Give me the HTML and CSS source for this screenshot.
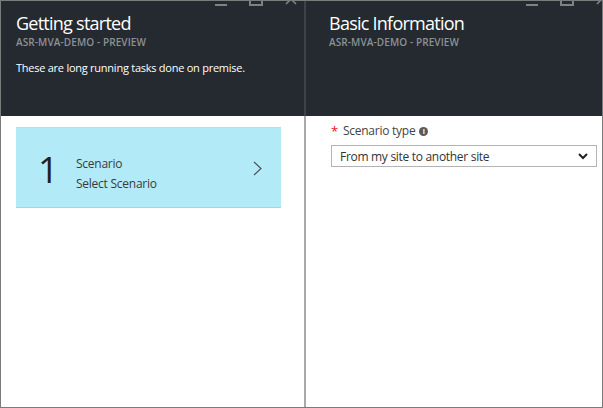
FILE: index.html
```html
<!DOCTYPE html>
<html lang="en">
<head>
<meta charset="utf-8">
<title>Getting started</title>
<link rel="stylesheet" href="styles.css">
</head>
<body>
<div class="frame">
  <section class="blade blade-left">
    <header class="blade-head">
      <div class="win-ctrls">
        <span class="ctl ctl-min"></span>
        <span class="ctl ctl-max"></span>
        <svg class="ctl-close" width="12" height="12" viewBox="0 0 12 12"><path d="M1 1 L11 11 M11 1 L1 11" stroke="#7d8287" stroke-width="1.6" fill="none"/></svg>
      </div>
      <h1 class="title">Getting started</h1>
      <div class="sub">ASR-MVA-DEMO - PREVIEW</div>
      <p class="desc">These are long running tasks done on premise.</p>
    </header>
    <div class="blade-body body-left">
      <div class="step">
        <div class="step-num">1</div>
        <div class="step-text">
          <div>Scenario</div>
          <div>Select Scenario</div>
        </div>
        <svg class="step-chev" width="9" height="15" viewBox="0 0 9 15"><path d="M1 1 L8 7.5 L1 14" stroke="#4a4a4a" stroke-width="1.1" fill="none"/></svg>
      </div>
    </div>
  </section>
  <section class="blade blade-right">
    <header class="blade-head head-right">
      <div class="win-ctrls">
        <span class="ctl ctl-min"></span>
        <span class="ctl ctl-max"></span>
        <svg class="ctl-close" width="12" height="12" viewBox="0 0 12 12"><path d="M1 1 L11 11 M11 1 L1 11" stroke="#7d8287" stroke-width="1.6" fill="none"/></svg>
      </div>
      <h1 class="title">Basic Information</h1>
      <div class="sub">ASR-MVA-DEMO - PREVIEW</div>
    </header>
    <div class="blade-body body-right">
      <div class="field-label">
        <span class="req">*</span>
        <span>Scenario type</span>
        <span class="info">i</span>
      </div>
      <div class="select">
        <span>From my site to another site</span>
        <svg class="sel-chev" width="10" height="7" viewBox="0 0 10 7"><path d="M1 1 L5 5 L9 1" stroke="#222" stroke-width="2" fill="none"/></svg>
      </div>
    </div>
  </section>
</div>
</body>
</html>
```

FILE: styles.css
```css
* { box-sizing: border-box; }
html, body { margin: 0; padding: 0; background: #fff; }
body { font-family: "Open Sans", "Noto Sans", sans-serif; }

.frame {
  width: 603px;
  height: 408px;
  border: 1px solid #7b7b7b;
  display: flex;
  overflow: hidden;
}

.blade { display: flex; flex-direction: column; }
.blade-left { width: 303px; }
.blade-right { flex: 1; }

.blade-head {
  position: relative;
  height: 115px;
  background: #252a30;
  padding: 10px 0 0 15px;
  overflow: hidden;
}
.head-right {
  border-left: 2px solid #3d4248;
  padding-left: 23px;
}

.win-ctrls {
  position: absolute;
  top: -8px;
  right: 7px;
  display: flex;
  align-items: flex-end;
  gap: 22px;
}
.blade-right .win-ctrls { right: -6px; }
.ctl-min { width: 12px; height: 2px; background: #7d8287; }
.ctl-max { width: 14px; height: 13px; border: 2px solid #7d8287; }
.ctl-close { display: block; margin-bottom: 1px; }

.title {
  margin: 0;
  font-weight: 400;
  font-size: 18px;
  line-height: 24px;
  color: #fff;
  letter-spacing: -0.75px;
}
.sub {
  margin-top: 1px;
  font-size: 10px;
  line-height: 12px;
  font-weight: 600;
  color: #8c9196;
  letter-spacing: 0.1px;
}
.desc {
  margin: 13px 0 0;
  font-size: 11px;
  line-height: 14px;
  color: #fff;
  letter-spacing: -0.25px;
}

.blade-body { flex: 1; }
.body-left { padding: 11px 0 0 15px; }
.body-right {
  border-left: 2px solid #a9a9a9;
  padding: 7px 0 0 25px;
}

.step {
  width: 265px;
  height: 81px;
  background: #b3eaf7;
  border-top: 1px solid #cfd6d9;
  border-bottom: 1px solid #c4c9cb;
  display: flex;
  align-items: center;
  padding: 4px 19px 0 22px;
}
.step-num {
  font-size: 36px;
  line-height: 40px;
  color: #222;
  width: 38px;
}
.step-text {
  flex: 1;
  margin-top: 8px;
  font-size: 12px;
  line-height: 20px;
  color: #3a3a3a;
  letter-spacing: -0.25px;
}
.step-chev { display: block; margin-top: -2px; }

.field-label {
  display: flex;
  align-items: center;
  font-size: 12px;
  line-height: 16px;
  color: #444;
  letter-spacing: -0.25px;
}
.req { color: #e81123; margin-right: 5px; font-size: 13px; }
.info {
  width: 9px;
  height: 9px;
  border-radius: 50%;
  background: #5a5a5a;
  color: #fff;
  font-size: 7px;
  line-height: 9px;
  text-align: center;
  font-weight: 700;
  margin-left: 4px;
  letter-spacing: 0;
}

.select {
  margin-top: 6px;
  width: 266px;
  height: 22px;
  border: 1px solid #b4b4b4;
  display: flex;
  align-items: center;
  justify-content: space-between;
  padding: 0 8px 0 8px;
  font-size: 12px;
  color: #333;
  letter-spacing: -0.3px;
}
.sel-chev { display: block; }
```
